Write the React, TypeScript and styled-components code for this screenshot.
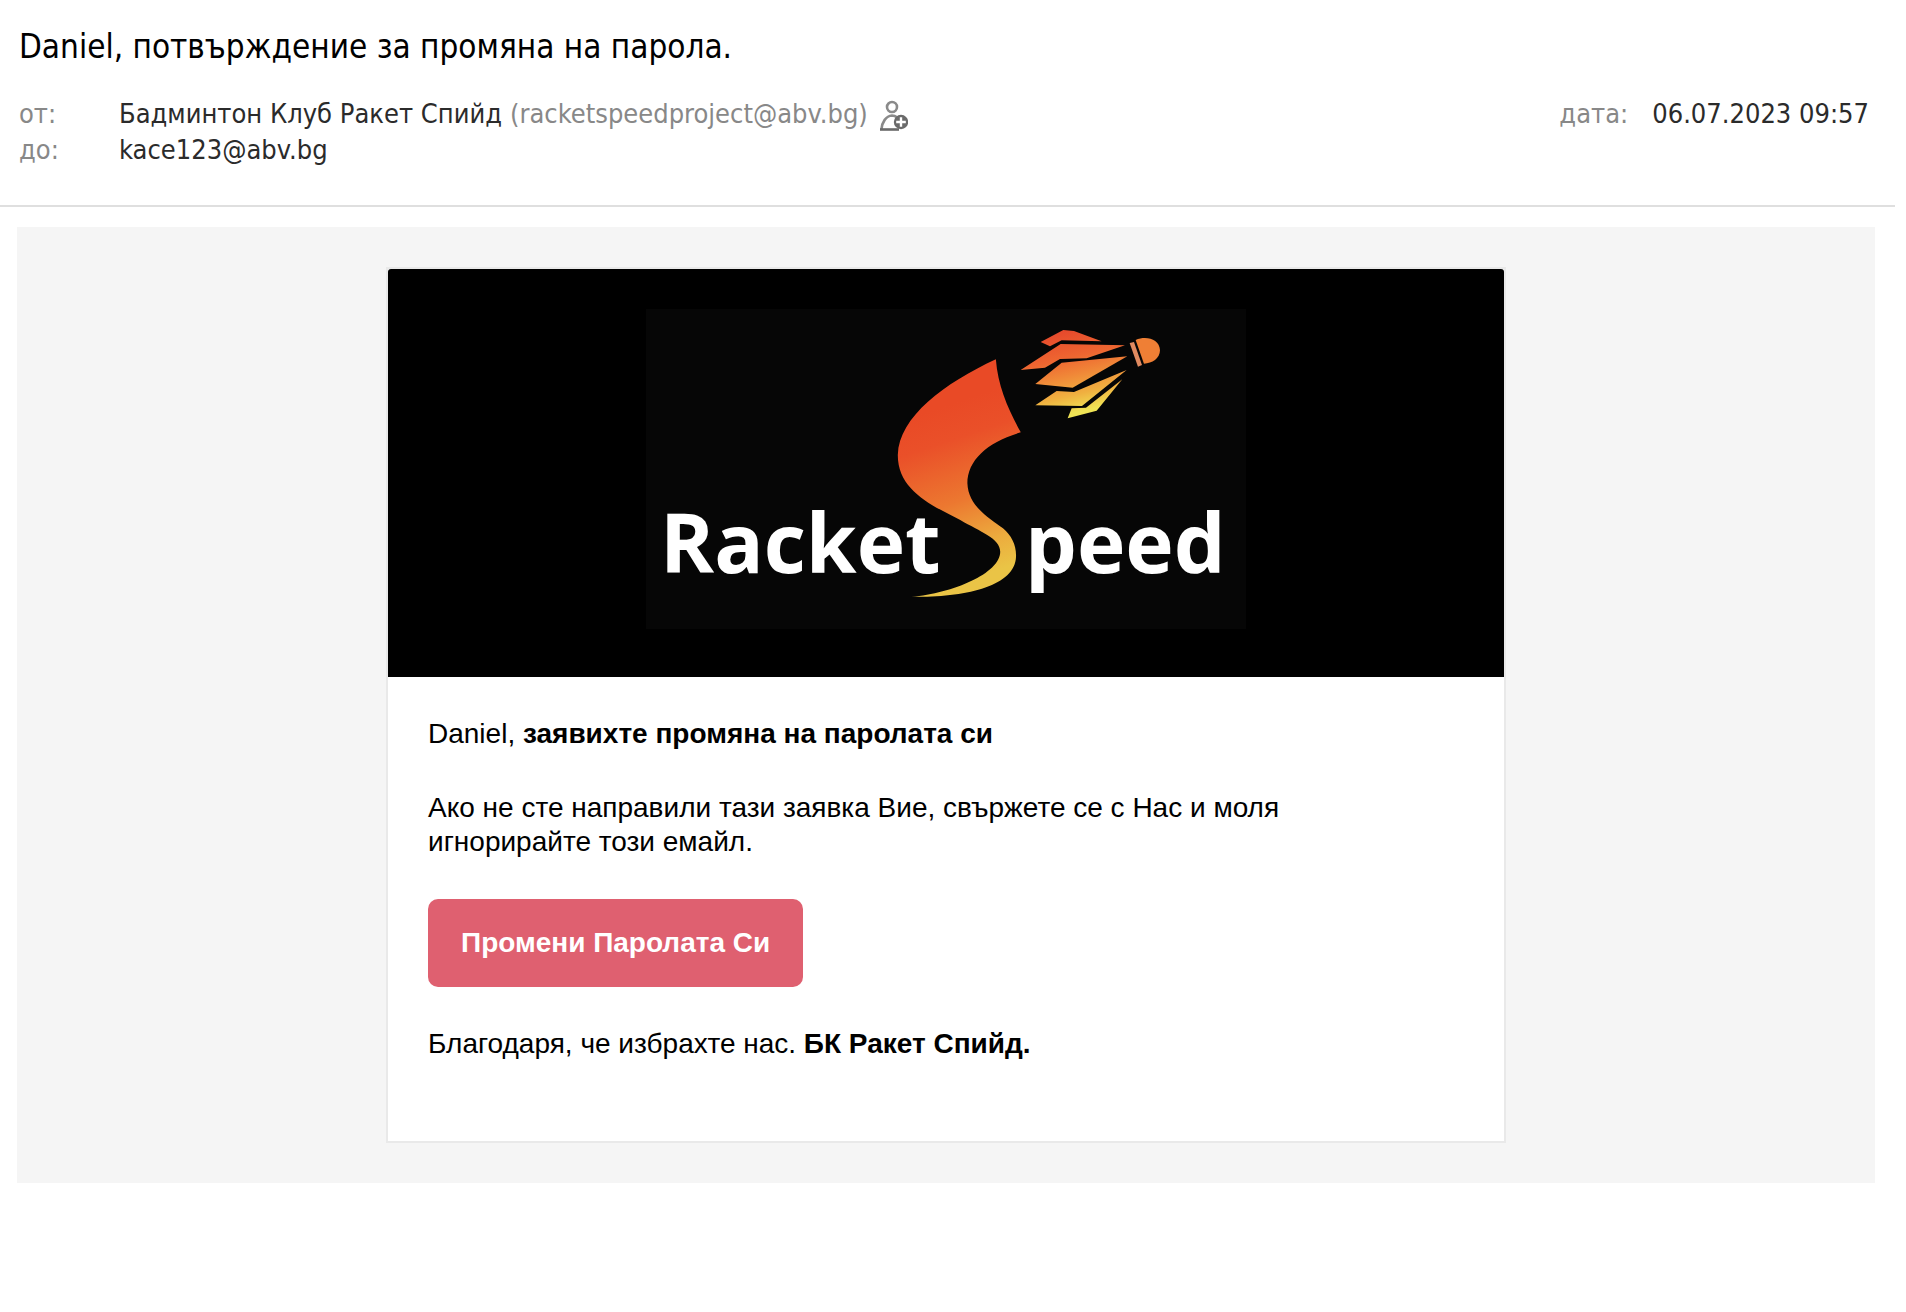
import React from 'react';
import styled, { createGlobalStyle } from 'styled-components';

const GlobalStyle = createGlobalStyle`
  *, *::before, *::after { box-sizing: border-box; }
  body { margin: 0; background: #fff; }
`;

const Page = styled.main`
  padding-right: 11px;
  font-family: 'DejaVu Sans Condensed', 'Noto Sans', sans-serif;
`;

const MailHeader = styled.header`
  padding: 25px 26px 37px 19px;
  border-bottom: 2px solid #dfdfdf;
`;

const Subject = styled.h1`
  margin: 0 0 27px;
  font-size: 33px;
  font-weight: 400;
  line-height: 44px;
  color: #000;
`;

const Meta = styled.div`
  display: flex;
  justify-content: space-between;
  align-items: flex-start;
`;

const Fields = styled.dl<{ $labelWidth: string; $gap: number }>`
  display: grid;
  grid-template-columns: ${(p) => p.$labelWidth} auto;
  column-gap: ${(p) => p.$gap}px;
  margin: 0;
  font-size: 27px;
  line-height: 36px;
`;

const Label = styled.dt`
  color: #888;
`;

const Value = styled.dd`
  display: flex;
  align-items: center;
  gap: 8px;
  margin: 0;
  color: #2b2b2b;
`;

const Address = styled.span`
  color: #888;
`;

const AddContact = styled.button`
  display: flex;
  margin: 0 0 0 4px;
  padding: 4px 0 0;
  border: 0;
  background: none;
  cursor: pointer;
`;

const Canvas = styled.section`
  margin: 20px 20px 0 17px;
  padding: 40px;
  background: #f5f5f5;
`;

const Card = styled.article`
  max-width: 1120px;
  margin: 0 auto;
  border: 2px solid #e9e9e9;
  background: #fff;
  font-family: 'Liberation Sans', Arial, sans-serif;
  font-size: 28px;
  line-height: 34px;
  color: #000;
`;

const Banner = styled.div`
  display: flex;
  justify-content: center;
  padding: 40px 40px 48px;
  border-radius: 3px 3px 0 0;
  background: #000;
`;

const Logo = styled.svg`
  display: block;
  width: 100%;
  max-width: 600px;
  height: auto;
  background: #060606;
`;

const Content = styled.div`
  display: flex;
  flex-direction: column;
  align-items: flex-start;
  gap: 40px;
  padding: 40px 40px 80px;
`;

const Text = styled.p`
  max-width: 960px;
  margin: 0;
`;

const Action = styled.a`
  padding: 27px 33px;
  border-radius: 10px;
  background: #df6070;
  color: #fff;
  font-weight: 700;
  text-decoration: none;
`;

function AddContactIcon() {
  return (
    <svg width="28" height="32" viewBox="0 0 28 32" fill="none" aria-hidden="true">
      <circle cx="12" cy="7" r="5" stroke="#8a8a8a" strokeWidth="2.6" />
      <path d="M1.4 29.5C2 22 6 16 12 15.5c2 0 3.500.6 5 1.8" stroke="#8a8a8a" strokeWidth="2.6" />
      <path d="M0 29.5h19" stroke="#6a6a6a" strokeWidth="2.6" />
      <circle cx="21" cy="22" r="7.2" fill="#6a6a6a" />
      <path d="M21 17.2v9.6M16.2 22h9.6" stroke="#fff" strokeWidth="2.4" />
    </svg>
  );
}

function RacketSpeedLogo() {
  return (
    <Logo viewBox="0 0 600 320" role="img" aria-label="Racket Speed">
      <defs>
        <linearGradient id="swoosh" gradientUnits="userSpaceOnUse" x1="740" y1="330" x2="930" y2="800">
          <stop offset="0" stopColor="#e94a26" />
          <stop offset="0.2" stopColor="#ea5029" />
          <stop offset="0.55" stopColor="#ec7830" />
          <stop offset="0.82" stopColor="#ecac3e" />
          <stop offset="1" stopColor="#eac446" />
        </linearGradient>
        <linearGradient id="feathers" gradientUnits="userSpaceOnUse" x1="600" y1="60" x2="660" y2="320">
          <stop offset="0" stopColor="#e64a2c" />
          <stop offset="0.3" stopColor="#ee6631" />
          <stop offset="0.5" stopColor="#f08838" />
          <stop offset="0.72" stopColor="#f0b040" />
          <stop offset="0.92" stopColor="#f0e455" />
        </linearGradient>
      </defs>
      <g transform="translate(-6 -9) scale(0.3954 0.3333)">
        <path
          fill="url(#swoosh)"
          d="M900 178C905 260 932 330 963 397C880 425 828 480 828 550C830 620 885 655 918 685C940 708 952 735 951 770C948 860 820 893 687 890C790 880 911 820 911 755C911 715 860 695 810 660C735 615 652 570 652 465C655 350 770 250 900 178Z"
        />
      </g>
      <g transform="translate(224 1) scale(0.3333)" fill="url(#feathers)">
        <path d="M512 96L580 60L612 63L695 94L575 91L540 109Z" />
        <path d="M452 180L572 102L765 106L650 145L570 147L525 173Z" />
        <path d="M496 222L575 158L772 139L608 233Z" />
        <path d="M496 286L560 243L612 246L770 180L636 288Z" />
        <path d="M593 325L605 295L648 293L757 208L680 302Z" />
        <path fill="#e08a60" d="M779 99L792 96L816 165L804 170Z" />
        <path fill="#ef7f35" d="M797 90C830 76 868 88 870 120C870 146 846 160 822 161Z" />
      </g>
      <g fill="#fff" fontFamily="'Open Sans', 'Noto Sans', sans-serif" fontSize="82" fontWeight="700">
        <text x="14" y="264">Racket</text>
        <text x="379" y="264">peed</text>
      </g>
    </Logo>
  );
}

export default function App() {
  return (
    <>
      <GlobalStyle />
      <Page>
        <MailHeader>
          <Subject>Daniel, потвърждение за промяна на парола.</Subject>
          <Meta>
            <Fields $labelWidth="100px" $gap={0}>
              <Label>от:</Label>
              <Value>
                Бадминтон Клуб Ракет Спийд <Address>(racketspeedproject@abv.bg)</Address>
                <AddContact type="button" aria-label="Добави контакт">
                  <AddContactIcon />
                </AddContact>
              </Value>
              <Label>до:</Label>
              <Value>kace123@abv.bg</Value>
            </Fields>
            <Fields $labelWidth="auto" $gap={24}>
              <Label>дата:</Label>
              <Value>06.07.2023 09:57</Value>
            </Fields>
          </Meta>
        </MailHeader>
        <Canvas>
          <Card>
            <Banner>
              <RacketSpeedLogo />
            </Banner>
            <Content>
              <Text>
                Daniel, <strong>заявихте промяна на паролата си</strong>
              </Text>
              <Text>
                Ако не сте направили тази заявка Вие, свържете се с Нас и моля игнорирайте този емайл.
              </Text>
              <Action href="#">Промени Паролата Си</Action>
              <Text>
                Благодаря, че избрахте нас. <strong>БК Ракет Спийд.</strong>
              </Text>
            </Content>
          </Card>
        </Canvas>
      </Page>
    </>
  );
}
